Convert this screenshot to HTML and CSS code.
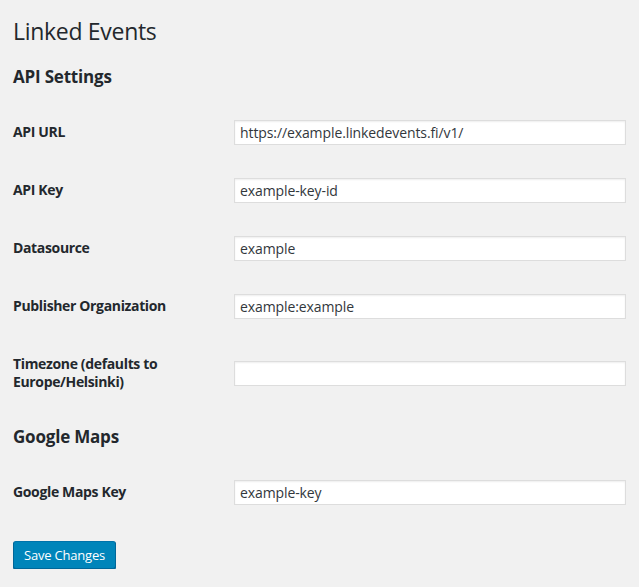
FILE: index.html
```html
<!doctype html>
<html lang="en">
	<head>
		<meta charset="UTF-8">
		<title>Linked Events</title>
		<link rel="stylesheet" href="styles.css">
	</head>
	<body>
		<div class="wrap">
			<h1>Linked Events</h1>
			<form class="settings">
				<h2>API Settings</h2>
				<div class="form-table">
					<div class="row">
						<label for="api-url">API URL</label>
						<div class="field"><input type="text" id="api-url" value="https://example.linkedevents.fi/v1/"></div>
					</div>
					<div class="row">
						<label for="api-key">API Key</label>
						<div class="field"><input type="text" id="api-key" value="example-key-id"></div>
					</div>
					<div class="row">
						<label for="datasource">Datasource</label>
						<div class="field"><input type="text" id="datasource" value="example"></div>
					</div>
					<div class="row">
						<label for="publisher">Publisher Organization</label>
						<div class="field"><input type="text" id="publisher" value="example:example"></div>
					</div>
					<div class="row">
						<label for="timezone">Timezone (defaults to Europe/Helsinki)</label>
						<div class="field"><input type="text" id="timezone" value=""></div>
					</div>
				</div>
				<h2 class="second">Google Maps</h2>
				<div class="form-table">
					<div class="row">
						<label for="maps-key">Google Maps Key</label>
						<div class="field"><input type="text" id="maps-key" value="example-key"></div>
					</div>
				</div>
				<p class="submit"><button type="button" class="button-primary">Save Changes</button></p>
			</form>
		</div>
	</body>
</html>
```

FILE: styles.css
```css
html,body,div,h1,h2,p,form,label,input,button {
	margin: 0;
	padding: 0;
	box-sizing: border-box;
}
body {
	background-color: #f1f1f1;
	color: #23282d;
	font-family: "Open Sans", "Liberation Sans", sans-serif;
	font-size: 13px;
}
.wrap {
	padding: 0 13px;
}
h1 {
	font-size: 23px;
	font-weight: 400;
	line-height: 29px;
	letter-spacing: -0.3px;
	padding-top: 17px;
}
h2 {
	font-size: 17px;
	font-weight: 700;
	line-height: 24px;
	letter-spacing: -0.2px;
	margin-top: 19px;
	margin-bottom: 14px;
}
h2.second {
	margin-top: 14px;
	margin-bottom: 14px;
}
.row {
	display: grid;
	grid-template-columns: 221px 1fr;
	align-items: center;
}
.row label {
	font-size: 14px;
	font-weight: 700;
	line-height: 18px;
	letter-spacing: -0.35px;
	padding: 20px 10px 20px 0;
}
.row .field {
	padding: 15px 0;
}
.row input {
	display: block;
	width: 100%;
	height: 25px;
	padding: 0 5px;
	background-color: #fff;
	border: 1px solid #ddd;
	box-shadow: inset 0 1px 2px rgba(0,0,0,.07);
	color: #32373c;
	font-family: inherit;
	font-size: 14px;
	letter-spacing: -0.1px;
	outline: none;
}
.submit {
	padding-top: 20px;
}
.button-primary {
	height: 28px;
	padding: 0 10px 1px;
	background-color: #0085ba;
	border: 1px solid #0073aa;
	border-color: #0073aa #006799 #006799;
	border-radius: 3px;
	box-shadow: 0 1px 0 #006799;
	color: #fff;
	font-family: inherit;
	font-size: 13px;
	letter-spacing: -0.2px;
	cursor: pointer;
}
```
